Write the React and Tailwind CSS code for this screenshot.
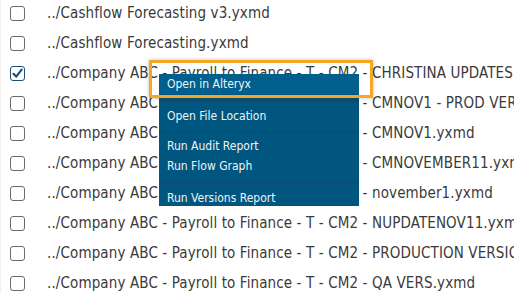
import React from "react";

const files = [
  { name: "../Cashflow Forecasting v3.yxmd" },
  { name: "../Cashflow Forecasting.yxmd" },
  { name: "../Company ABC - Payroll to Finance - T - CM2 - CHRISTINA UPDATES.yxmd", checked: true },
  { name: "../Company ABC - Payroll to Finance - T - CM2 - CMNOV1 - PROD VERSION.yxmd" },
  { name: "../Company ABC - Payroll to Finance - T - CM2 - CMNOV1.yxmd" },
  { name: "../Company ABC - Payroll to Finance - T - CM2 - CMNOVEMBER11.yxmd" },
  { name: "../Company ABC - Payroll to Finance - T - CM2 - november1.yxmd" },
  { name: "../Company ABC - Payroll to Finance - T - CM2 - NUPDATENOV11.yxmd" },
  { name: "../Company ABC - Payroll to Finance - T - CM2 - PRODUCTION VERSION.yxmd" },
  { name: "../Company ABC - Payroll to Finance - T - CM2 - QA VERS.yxmd" },
];

const Checkbox = ({ checked }) => (
  <span
    className={`flex h-[15px] w-[15px] shrink-0 items-center justify-center rounded-[3px] border-[1.5px] bg-white ${
      checked ? "border-[#1d4f73]" : "border-[#6b6b6b]"
    }`}
  >
    {checked && (
      <svg width="11" height="11" viewBox="0 0 11 11">
        <path d="M1.5 5.8 L4.2 8.6 L9.6 1.6" fill="none" stroke="#1d4f73" strokeWidth="2.2" strokeLinecap="round" strokeLinejoin="round" />
      </svg>
    )}
  </span>
);

const MenuItem = ({ children, active }) => (
  <div className={`flex h-[20px] items-center pl-[8px] ${active ? "bg-[#015f8e]" : ""}`}>{children}</div>
);

const Separator = ({ h }) => (
  <div className={`flex flex-col justify-center ${h}`}>
    <div className="h-px bg-[#0b4a6c]" />
  </div>
);

export default function App() {
  return (
    <div className="relative h-[293px] w-[528px] overflow-hidden bg-white font-['DejaVu_Sans_Condensed','DejaVu_Sans',sans-serif]">
      <div className="absolute left-0 top-0 h-full w-px bg-[#f0f0f0]" />
      <div className="-mt-[2px] w-[514px] overflow-hidden">
        {files.map((f, i) => (
          <div key={i} className="flex h-[30px] items-center whitespace-nowrap">
            <div className="w-[47px] shrink-0 pl-[10px]">
              <Checkbox checked={f.checked} />
            </div>
            <span className="text-[15px] tracking-[0.12px] text-[#3a3a3a]">{f.name}</span>
          </div>
        ))}
      </div>

      {/* context menu */}
      <div className="absolute left-[159px] top-[74px] h-[132px] w-[200px] overflow-hidden bg-[#01567f] text-[12px] text-[#eef4f8]">
        <MenuItem active>Open in Alteryx</MenuItem>
        <Separator h="h-[12px]" />
        <MenuItem>Open File Location</MenuItem>
        <Separator h="h-[10px]" />
        <MenuItem>Run Audit Report</MenuItem>
        <MenuItem>Run Flow Graph</MenuItem>
        <Separator h="h-[12px]" />
        <MenuItem>Run Versions Report</MenuItem>
      </div>

      {/* highlight box */}
      <div className="absolute left-[149px] top-[60px] h-[38px] w-[224px] border-[3px] border-[#f5a623] shadow-[0_0_4px_rgba(0,0,0,0.25)]" />
    </div>
  );
}
